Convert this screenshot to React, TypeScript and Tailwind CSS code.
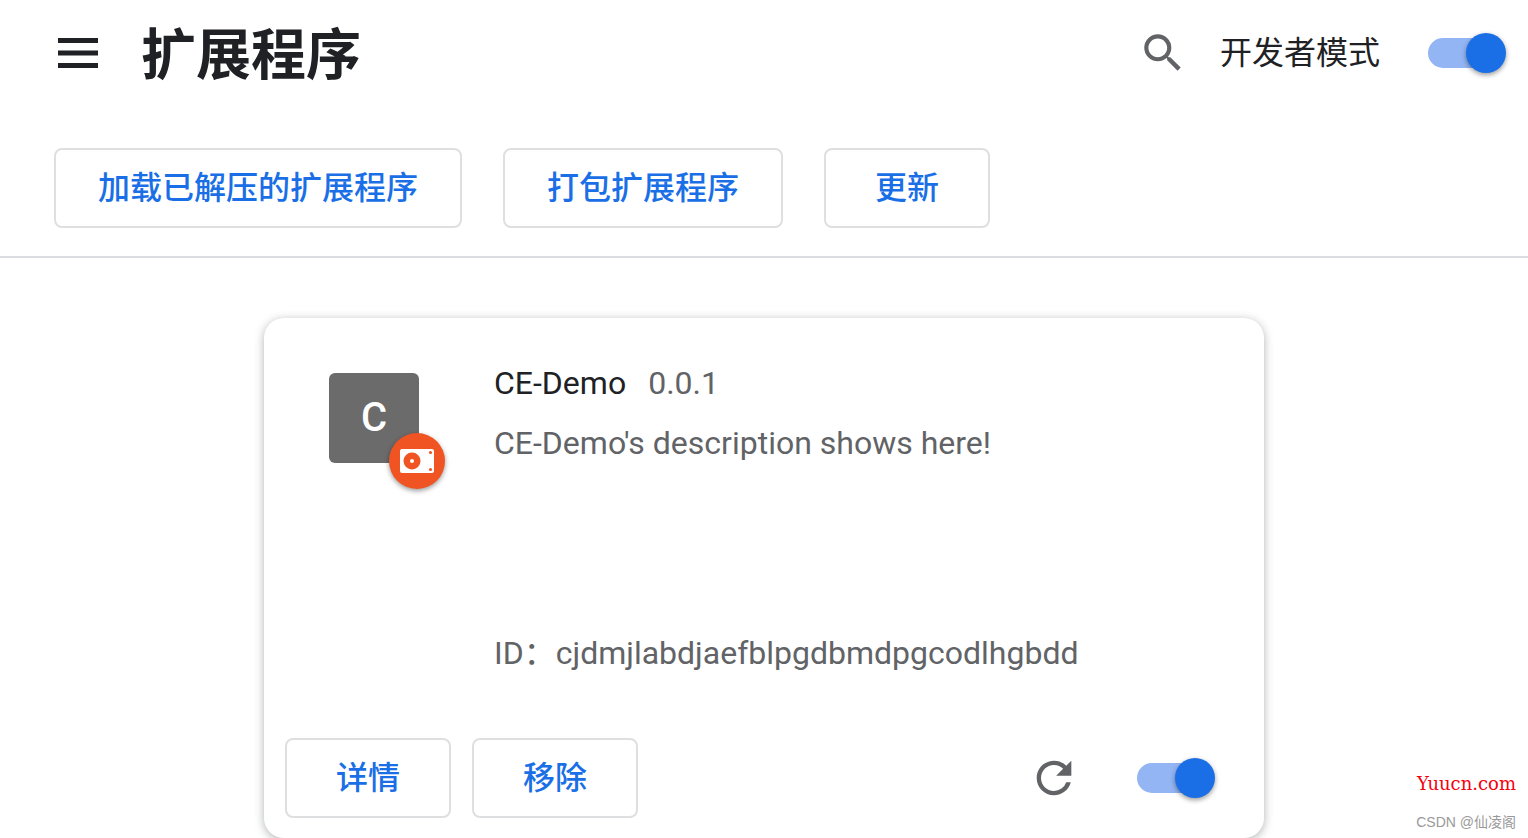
import { useState } from "react";
import { MdRefresh, MdSearch } from "react-icons/md";

const toolbarActions = ["加载已解压的扩展程序", "打包扩展程序", "更新"];

const extension = {
  name: "CE-Demo",
  version: "0.0.1",
  description: "CE-Demo's description shows here!",
  id: "cjdmjlabdjaefblpgdbmdpgcodlhgbdd",
};

function OutlineButton({ label }: { label: string }) {
  return (
    <button
      type="button"
      className="flex h-20 min-w-[166px] items-center justify-center rounded-lg border-2 border-[#dedfe1] px-[42px] pb-px text-[32px] leading-10 font-medium text-[#1a6fe6] hover:bg-blue-50"
    >
      {label}
    </button>
  );
}

function Toggle({ id, label }: { id: string; label?: string }) {
  const [on, setOn] = useState(true);
  return (
    <input
      id={id}
      type="checkbox"
      role="switch"
      aria-label={label}
      checked={on}
      onChange={() => setOn(!on)}
      className="flex h-10 w-[78px] shrink-0 cursor-pointer appearance-none items-center before:h-[30px] before:w-[66px] before:rounded-full before:bg-gray-300 after:-ml-7 after:size-10 after:rounded-full after:bg-white after:shadow-[0_2px_5px_rgba(0,0,0,0.4)] checked:before:bg-[#93b5f4] checked:after:bg-[#1a6fe6]"
    />
  );
}

function Header() {
  return (
    <header className="flex h-[106px] items-center pr-[22px] pl-[58px]">
      <button type="button" aria-label="主菜单" className="mr-[43px]">
        <svg width="40" height="30" viewBox="0 0 40 30" fill="#202124">
          <path d="M0 0h40v5H0zM0 12.5h40v5H0zM0 25h40v5H0z" />
        </svg>
      </button>
      <h1 className="pt-1 text-[55px] leading-[64px] font-bold">扩展程序</h1>
      <button type="button" aria-label="搜索" className="mr-8 ml-auto text-[#616366]">
        <MdSearch size={50} />
      </button>
      <label htmlFor="dev-mode" className="mr-12 text-[32px] leading-10">
        开发者模式
      </label>
      <Toggle id="dev-mode" />
    </header>
  );
}

function ExtensionIcon() {
  return (
    <div className="relative mt-[10px] flex size-[90px] shrink-0 items-center justify-center rounded-md bg-[#6b6b6b] text-[40px] font-medium text-white">
      C
      <span className="absolute -right-[26px] -bottom-[26px] flex size-14 items-center justify-center rounded-full bg-[#f05423] shadow-[0_2px_5px_rgba(0,0,0,0.4)]">
        <svg width="34" height="24" viewBox="0 0 34 24">
          <rect width="34" height="24" rx="2" fill="#fff" />
          <circle cx="12" cy="12" r="8.5" fill="#f05423" />
          <circle cx="12" cy="12" r="2" fill="#fff" />
          <circle cx="30.5" cy="3.5" r="1.6" fill="#f05423" />
          <circle cx="30.5" cy="20.5" r="1.6" fill="#f05423" />
        </svg>
      </span>
    </div>
  );
}

function ExtensionCard() {
  return (
    <article className="mx-auto w-full max-w-[1000px] rounded-[20px] bg-white shadow-[0_2px_10px_rgba(60,64,67,0.4)]">
      <div className="flex gap-[75px] px-[65px] pt-[45px]">
        <ExtensionIcon />
        <div className="min-w-0 text-[32px] leading-10 text-[#616366]">
          <h2 className="flex gap-[22px]">
            <span className="text-[#202124]">{extension.name}</span>
            <span>{extension.version}</span>
          </h2>
          <p className="mt-5 min-h-[210px]">{extension.description}</p>
          <p className="break-words">ID：{extension.id}</p>
        </div>
      </div>
      <div className="flex items-center gap-[21px] pt-[65px] pr-[49px] pb-5 pl-[21px]">
        <OutlineButton label="详情" />
        <OutlineButton label="移除" />
        <button type="button" aria-label="重新加载" className="mr-9 ml-auto text-[#616366]">
          <MdRefresh size={52} />
        </button>
        <Toggle id="enable" label="启用" />
      </div>
    </article>
  );
}

export default function App() {
  return (
    <div className="relative min-h-screen bg-white font-['Roboto','Noto_Sans_CJK_SC',sans-serif] text-[#202124]">
      <Header />
      <div className="flex flex-wrap gap-[41px] border-b-2 border-[#dadce0] px-[54px] pt-[42px] pb-7">
        {toolbarActions.map((label) => (
          <OutlineButton key={label} label={label} />
        ))}
      </div>
      <main className="pt-[60px]">
        <ExtensionCard />
      </main>
      <footer className="absolute right-3 bottom-[6px] text-right">
        <p className="font-['DejaVu_Serif',serif] text-[18px] leading-6 text-[#f5000f]">Yuucn.com</p>
        <p className="mt-4 font-['Liberation_Sans','Noto_Sans_CJK_SC',sans-serif] text-[14px] leading-5 text-[#999999]">
          CSDN @仙凌阁
        </p>
      </footer>
    </div>
  );
}
